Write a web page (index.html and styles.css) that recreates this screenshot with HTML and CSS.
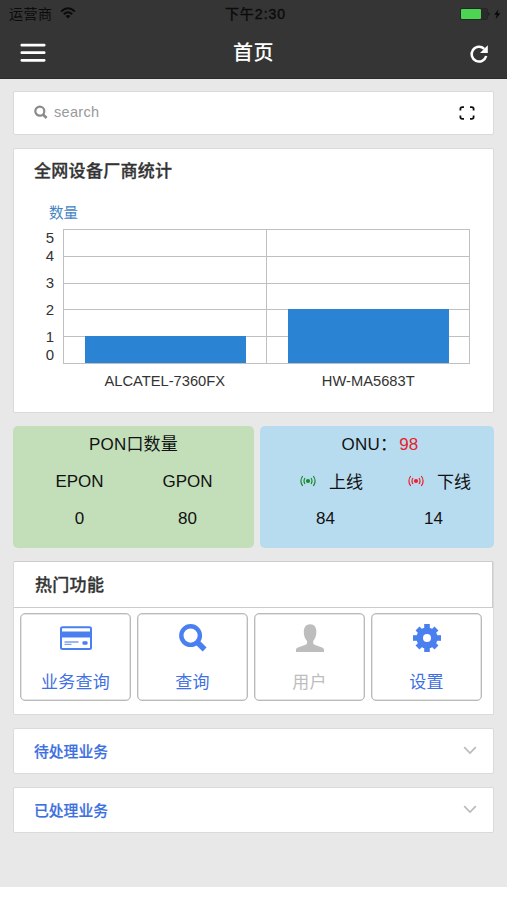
FILE: index.html
```html
<!DOCTYPE html>
<html lang="zh-CN">
<head>
    <meta charset="UTF-8">
    <title>首页</title>
    <link rel="stylesheet" href="styles.css">
</head>
<body>
    <header class="header">
        <div class="status">
            <div class="carrier">
                <span>运营商</span>
                <svg width="16" height="12" viewBox="0 0 16 12" fill="none" stroke="#0b0b0b" stroke-width="2">
                    <path d="M1.2 4.4Q8-1.8 14.8 4.4M3.8 7.2Q8 3.4 12.2 7.2"/>
                    <path d="M8 11.5L5.6 9Q8 7.2 10.4 9Z" fill="#0b0b0b" stroke="none"/>
                </svg>
            </div>
            <span class="time">下午2:30</span>
            <svg class="battery" width="42" height="14" viewBox="0 0 42 14">
                <rect x="0.5" y="1.5" width="27" height="11" rx="1.5" fill="#2b2b2b" stroke="#262626"/>
                <rect x="1" y="2" width="20" height="10" rx="1" fill="#4cd552"/>
                <path d="M28.5 5q2 2 0 4z" fill="#111"/>
                <path d="M38.5 2.2L34.2 7.8h2.6L35.6 12.2 40.4 6.2h-2.9z" fill="#080808"/>
            </svg>
        </div>
        <nav class="navbar">
            <svg class="menu" width="26" height="20" viewBox="0 0 26 20" stroke="#fff" stroke-width="2.7" stroke-linecap="round">
                <path d="M1.8 2.2H24.2M1.8 9.7H24.2M1.8 17.3H24.2"/>
            </svg>
            <h1>首页</h1>
            <svg class="refresh" width="20" height="20" viewBox="0 0 20 20">
                <path d="M15.2 4.8A7.4 7.4 0 1 0 17.2 12" fill="none" stroke="#fff" stroke-width="2.5"/>
                <path d="M18.8 1.2V9H11z" fill="#fff"/>
            </svg>
        </nav>
    </header>

    <main class="content">
        <div class="card search">
            <svg width="14" height="14" viewBox="0 0 14 14" fill="none" stroke="#8a8a8a">
                <circle cx="5.8" cy="6.2" r="4.5" stroke-width="2.2"/>
                <path d="M9 9.5L12.6 13" stroke-width="2.6"/>
            </svg>
            <span>search</span>
            <svg class="scan" width="16" height="14" viewBox="0 0 16 14" fill="none" stroke="#111" stroke-width="1.8">
                <path d="M1.4 4.5V3Q1.4 1.2 3.2 1.2H5M11 1.2h1.8Q14.6 1.2 14.6 3V4.5M14.6 9.5V11Q14.6 12.8 12.8 12.8H11M5 12.8H3.2Q1.4 12.8 1.4 11V9.5"/>
            </svg>
        </div>

        <section class="card stats">
            <h2>全网设备厂商统计</h2>
            <div class="axis-name">数量</div>
            <div class="chart">
                <div class="y-axis">
                    <span>5</span><span>4</span><span>3</span><span>2</span><span>1</span><span>0</span>
                </div>
                <div class="plot">
                    <div class="slot"><div class="bar" style="height: 20%"></div></div>
                    <div class="slot"><div class="bar" style="height: 40%"></div></div>
                </div>
            </div>
            <div class="x-axis">
                <span>ALCATEL-7360FX</span>
                <span>HW-MA5683T</span>
            </div>
        </section>

        <div class="counts">
            <div class="count pon">
                <div class="count-title">PON口数量</div>
                <div class="cols">
                    <span>EPON</span><span>GPON</span>
                    <span>0</span><span>80</span>
                </div>
            </div>
            <div class="count onu">
                <div class="count-title">ONU：<b>98</b></div>
                <div class="cols">
                    <span class="state online">
                        <svg width="16" height="12" viewBox="0 0 16 12" fill="none" stroke="currentColor" stroke-width="1.2">
                            <circle cx="8" cy="6" r="2.1" fill="currentColor" stroke="none"/>
                            <path d="M5 3Q3 6 5 9M11 3Q13 6 11 9M2.7 1Q-.9 6 2.7 11M13.3 1Q16.9 6 13.3 11"/>
                        </svg>
                        <em>上线</em>
                    </span>
                    <span class="state offline">
                        <svg width="16" height="12" viewBox="0 0 16 12" fill="none" stroke="currentColor" stroke-width="1.2">
                            <circle cx="8" cy="6" r="2.1" fill="currentColor" stroke="none"/>
                            <path d="M5 3Q3 6 5 9M11 3Q13 6 11 9M2.7 1Q-.9 6 2.7 11M13.3 1Q16.9 6 13.3 11"/>
                        </svg>
                        <em>下线</em>
                    </span>
                    <span>84</span><span>14</span>
                </div>
            </div>
        </div>

        <section class="card hot">
            <h2>热门功能</h2>
            <div class="tiles">
                <div class="tile">
                    <svg width="32" height="30" viewBox="0 0 32 30">
                        <rect x="1" y="4.3" width="30" height="21.7" rx="1.5" fill="none" stroke="#4a7ff0" stroke-width="2"/>
                        <path d="M1 8.5h30v6H1z" fill="#4a7ff0"/>
                        <path d="M4.5 19h14M4.5 21.4h7" stroke="#7b9ff4" stroke-width="1.4"/>
                        <rect x="22.5" y="18.3" width="5" height="3.4" rx="1" fill="#4a7ff0"/>
                    </svg>
                    <span>业务查询</span>
                </div>
                <div class="tile">
                    <svg width="28" height="30" viewBox="0 0 28 30" fill="none" stroke="#4a7ff0">
                        <circle cx="11.6" cy="12.6" r="9.3" stroke-width="4.4"/>
                        <path d="M18.3 19.3L25.6 26.5" stroke-width="5.6"/>
                    </svg>
                    <span>查询</span>
                </div>
                <div class="tile disabled">
                    <svg width="28" height="30" viewBox="0 0 28 30">
                        <path d="M0 29V26.5C0 25 3 24 6 23C9 22 11 21.5 11 20V18C9 16 7.8 13 7.8 9C7.8 4 10 1.2 14.2 1.2S20.4 4 20.4 9C20.4 13 19 16 17.2 18V20C17.2 21.5 19 22 22 23C25 24 28 25 28 26.5V29Z" fill="#bdbdbd"/>
                    </svg>
                    <span>用户</span>
                </div>
                <div class="tile">
                    <svg width="28" height="30" viewBox="-14 -15 28 30" fill="#4a7ff0">
                        <path d="M-2.8-14H2.8V14H-2.8z"/>
                        <path d="M-2.8-13.4H2.8V13.4H-2.8z" transform="rotate(45)"/>
                        <path d="M-2.8-14H2.8V14H-2.8z" transform="rotate(90)"/>
                        <path d="M-2.8-13.4H2.8V13.4H-2.8z" transform="rotate(135)"/>
                        <circle r="10.6"/>
                        <circle r="4" fill="#fff"/>
                    </svg>
                    <span>设置</span>
                </div>
            </div>
        </section>

        <div class="card fold">
            <span>待处理业务</span>
            <svg width="14" height="9" viewBox="0 0 14 9" fill="none" stroke="#bbb" stroke-width="1.7"><path d="M1.2 1.2L7 7L12.8 1.2"/></svg>
        </div>
        <div class="card fold">
            <span>已处理业务</span>
            <svg width="14" height="9" viewBox="0 0 14 9" fill="none" stroke="#bbb" stroke-width="1.7"><path d="M1.2 1.2L7 7L12.8 1.2"/></svg>
        </div>
    </main>
</body>
</html>
```

FILE: styles.css
```css
* { box-sizing: border-box; }
body { margin: 0; background-color: #fff; color: #333; font-family: "Liberation Sans", "Noto Sans CJK SC", sans-serif; }
h1, h2 { margin: 0; }
svg { display: block; flex: none; }

.header { height: 79px; background-color: #353535; border-bottom: 1px solid #2b2b2b; }
.status { display: grid; grid-template-columns: 1fr auto 1fr; align-items: center; height: 27px; padding: 0 5px 0 9px; color: #0b0b0b; font-size: 14px; line-height: 20px; }
.carrier { display: flex; align-items: center; gap: 7px; letter-spacing: 0.5px; }
.carrier svg { margin-top: -2px; }
.time { letter-spacing: 1px; -webkit-text-stroke: 0.4px #0b0b0b; }
.battery { justify-self: end; }
.navbar { display: grid; grid-template-columns: 1fr auto 1fr; align-items: center; height: 51px; padding: 0 18px 0 20px; color: #fff; }
.navbar h1 { font-size: 20px; font-weight: 500; line-height: 30px; letter-spacing: 0.4px; margin-right: 2px; }
.refresh { justify-self: end; margin-top: 3px; }

.content { display: flex; flex-direction: column; gap: 13px; height: 808px; padding: 12px 13px 0; background-color: #e8e8e8; }
.card { flex: none; background-color: #fff; border: 1px solid #dadada; border-radius: 2px; }

.search { display: flex; align-items: center; height: 44px; padding: 0 18px 2px 20px; color: #999; font-size: 14.5px; letter-spacing: 0.3px; }
.search span { margin-left: 6px; margin-top: -1px; }
.scan { margin-left: auto; margin-top: 2px; }

.stats { height: 265px; padding: 11px 23px 0 20px; }
.stats h2, .hot h2 { font-size: 17px; font-weight: 500; line-height: 24px; letter-spacing: 0.3px; -webkit-text-stroke: 0.3px #333; }
.axis-name { margin: 19px 0 6px 15px; color: #4584c4; font-size: 14.5px; line-height: 20px; }
.chart { display: flex; height: 135px; }
.y-axis { display: grid; grid-template-rows: 13px repeat(4, 27px) 14px; align-items: center; width: 20px; margin-right: 9px; text-align: right; font-size: 15px; line-height: 17px; }
.y-axis span:first-child { align-self: start; }
.y-axis span:last-child { align-self: end; margin-bottom: 1px; }
.plot { display: grid; grid-template-columns: 1fr 1fr; flex: 1; border-left: 1px solid #c0c0c0; background: repeating-linear-gradient(#c0c0c0 0 1px, transparent 1px 26.8px); border-bottom: 1px solid #c0c0c0; }
.slot { display: flex; align-items: flex-end; justify-content: center; border-right: 1px solid #c0c0c0; }
.bar { width: 161px; background-color: #2b84d3; }
.x-axis { display: grid; grid-template-columns: 1fr 1fr; margin: 7px 0 0 29px; text-align: center; font-size: 14.7px; line-height: 20px; }

.counts { display: grid; grid-template-columns: 241px 1fr; gap: 6px; height: 122px; color: #111; font-size: 17px; }
.count { border-radius: 5px; padding-top: 6px; text-align: center; }
.pon { background-color: #c2dfba; }
.onu { background-color: #b8dcef; }
.count-title { height: 25px; line-height: 25px; letter-spacing: 0.2px; }
.onu .count-title { padding-left: 6px; }
.count-title b { margin-left: 2px; color: #e8202a; font-weight: normal; }
.cols { display: grid; grid-template-columns: 108px 108px; grid-auto-rows: 37px; justify-content: center; align-items: center; padding-top: 6px; }
.onu .cols { padding-left: 5px; }
.state { display: flex; align-items: center; justify-content: center; gap: 13px; padding-left: 12px; margin-top: -2px; }
.state em { color: #111; font-style: normal; }
.online { color: #168a2c; }
.offline { color: #f0202c; }

.hot { height: 154px; border-top-color: #ccc; }
.hot h2 { height: 46px; padding-left: 21px; line-height: 48px; border: 1px solid #ccc; border-top: 0; border-left: 0; }
.tiles { display: grid; grid-template-columns: repeat(4, 111px); gap: 6px; padding: 5px 6px 0; }
.tile { display: flex; flex-direction: column; align-items: center; height: 88px; padding-top: 9px; border: 1px solid #bababa; border-radius: 5px; box-shadow: inset 0 0 0 0.5px #ccc; color: #3f70e4; font-size: 17px; }
.tile span { margin-top: 17px; line-height: 25px; letter-spacing: 0.2px; }
.disabled { color: #bdbdbd; }

.fold { display: flex; align-items: center; justify-content: space-between; height: 46px; padding: 0 16px 2px 20px; color: #3c6fe0; font-size: 14.8px; font-weight: 500; -webkit-text-stroke: 0.2px #3c6fe0; }
```
